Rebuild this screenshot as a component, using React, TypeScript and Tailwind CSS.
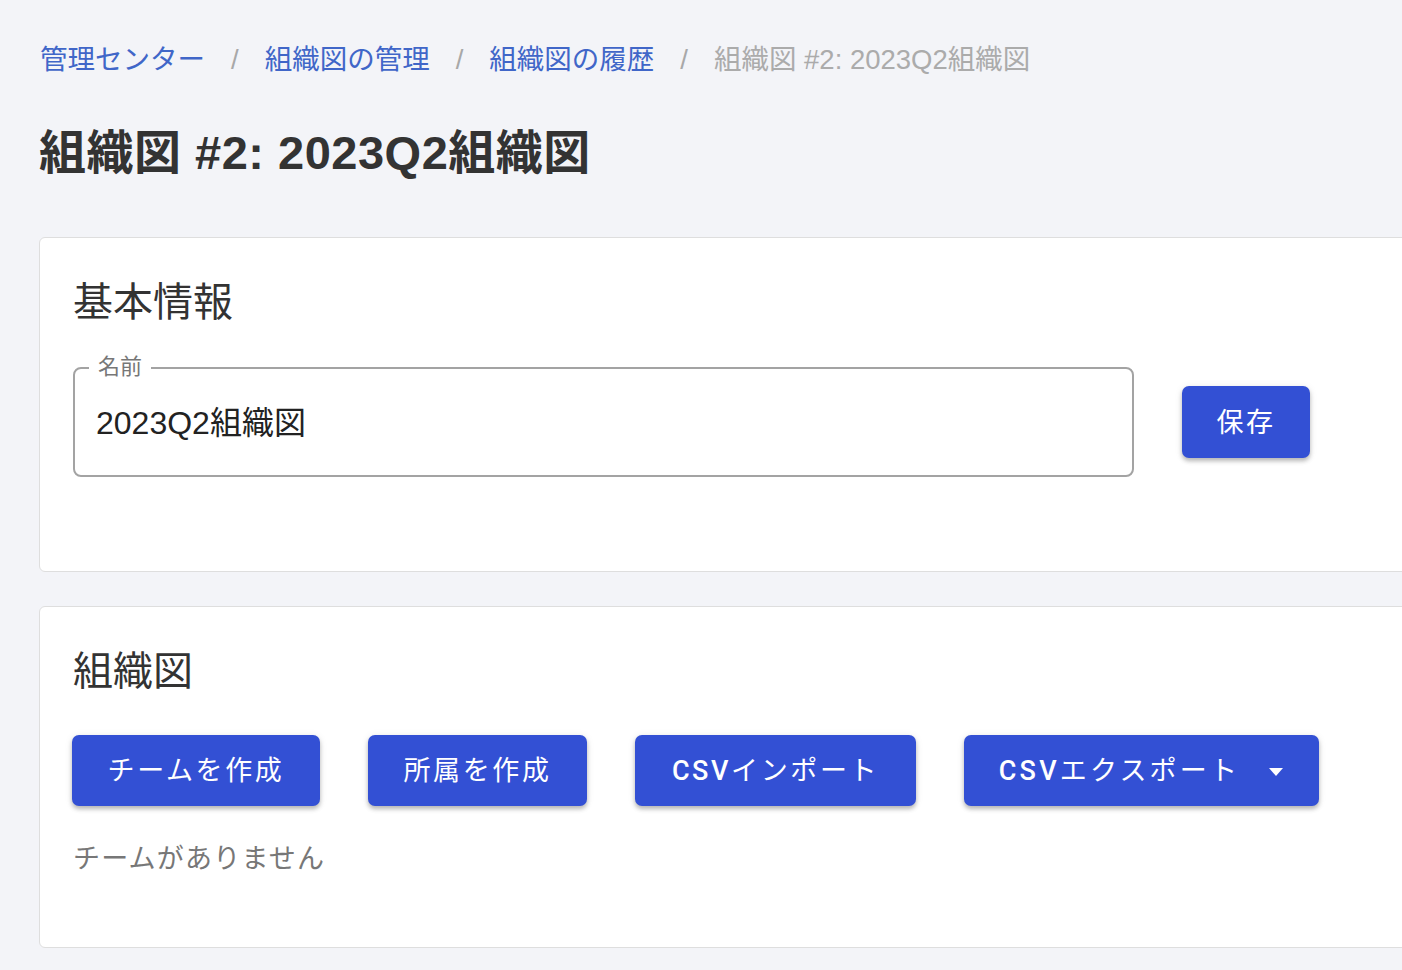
import React from "react";

const FONT = { fontFamily: '"Liberation Sans", "Noto Sans CJK JP", sans-serif' };
const BTN_FONT = { fontFamily: 'Roboto, "Noto Sans CJK JP", sans-serif' };

function Btn({ w, children }: { w: string; children: React.ReactNode }) {
  return (
    <button
      className={`${w} h-[71px] shrink-0 rounded-[7px] bg-[#3350d4] text-white text-[27px] font-normal tracking-[2.6px] flex items-center justify-center pt-[2px] shadow-[0_3px_4px_rgba(0,0,0,0.25),0_1px_8px_rgba(0,0,0,0.08)]`}
      style={BTN_FONT}
    >
      {children}
    </button>
  );
}

export default function App() {
  return (
    <div className="w-[1402px] min-h-[970px] overflow-hidden bg-[#f3f4f8] pl-[39px] pt-[40px] pb-[24px]" style={FONT}>
      <nav className="h-[40px] flex items-center text-[27.5px] whitespace-nowrap">
        <span className="text-[#4066c8] ml-[1px]">管理センター</span>
        <span className="text-[#a8a8a8] mx-[26px]">/</span>
        <span className="text-[#4066c8]">組織図の管理</span>
        <span className="text-[#a8a8a8] mx-[26px]">/</span>
        <span className="text-[#4066c8]">組織図の履歴</span>
        <span className="text-[#a8a8a8] mx-[26px]">/</span>
        <span className="text-[#ababab]">組織図 #2: 2023Q2組織図</span>
      </nav>

      <h1 className="mt-[45px] h-[56px] leading-[56px] text-[47px] tracking-[0.5px] font-bold text-[#333] whitespace-nowrap">
        組織図 #2: 2023Q2組織図
      </h1>

      <section className="mt-[56px] w-[1420px] h-[335px] bg-white border border-[#dedede] rounded-[6px] pl-[33px] pt-[40px]">
        <h2 className="h-[48px] leading-[48px] text-[40px] text-[#333]">基本情報</h2>
        <div className="mt-[41px] flex items-center">
          <div className="relative w-[1061px] h-[110px] border-2 border-[#a3a3a3] rounded-[8px] flex items-center pl-[21px]">
            <span className="absolute -top-[16px] left-[14px] bg-white px-[9px] text-[22px] leading-[28px] text-[#777]">
              名前
            </span>
            <span className="text-[32px] text-[#222] mt-[1px]">2023Q2組織図</span>
          </div>
          <div className="ml-[48px]">
            <Btn w="w-[128px] h-[72px]">保存</Btn>
          </div>
        </div>
      </section>

      <section className="mt-[34px] w-[1420px] h-[342px] bg-white border border-[#dedede] rounded-[6px] pl-[32px] pt-[40px]">
        <h2 className="ml-[1px] h-[48px] leading-[48px] text-[40px] text-[#333]">組織図</h2>
        <div className="mt-[40px] flex gap-[48px]">
          <Btn w="w-[248px]">チームを作成</Btn>
          <Btn w="w-[219px]">所属を作成</Btn>
          <Btn w="w-[281px]">
            <span className="font-medium">CSV</span>インポート
          </Btn>
          <Btn w="w-[355px]">
            <span className="tracking-[3.2px]">
              <span className="font-medium">CSV</span>エクスポート
            </span>
            <svg className="ml-[28px]" width="16" height="10" viewBox="0 0 16 10">
              <path d="M1 1h14L8 9z" fill="white" />
            </svg>
          </Btn>
        </div>
        <p className="ml-[1px] mt-[33px] h-[40px] leading-[40px] text-[27px] text-[#777] tracking-[1.2px]">チームがありません</p>
      </section>
    </div>
  );
}
